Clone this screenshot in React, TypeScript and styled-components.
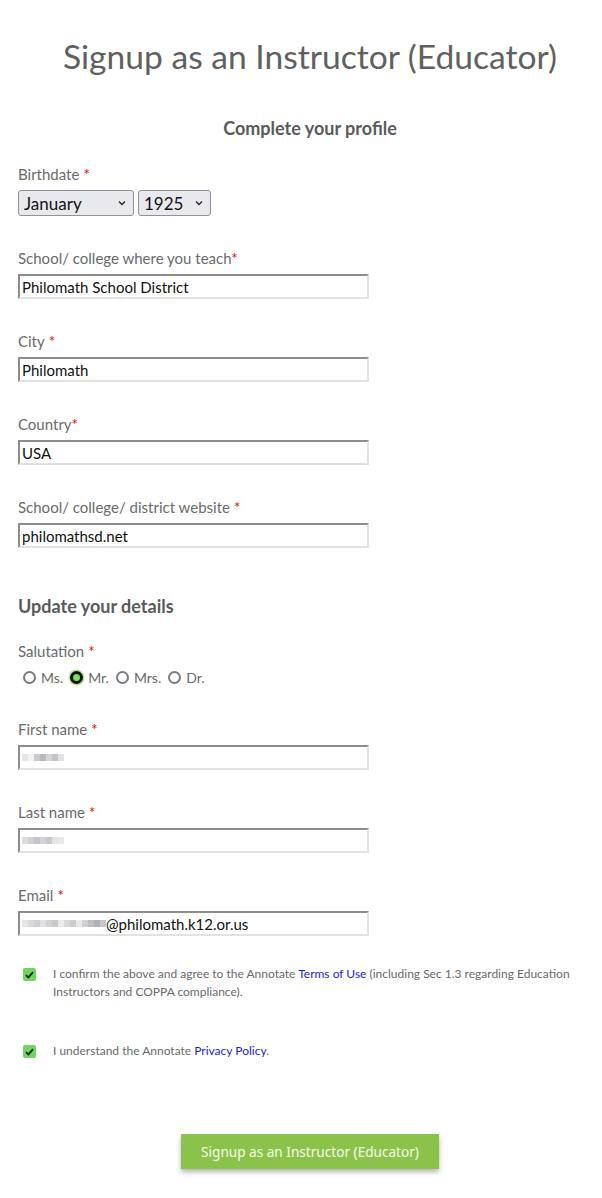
import React from 'react';
import styled, { createGlobalStyle } from 'styled-components';

const GlobalStyle = createGlobalStyle`
  html, body {
    margin: 0;
    padding: 0;
    background: #fff;
  }
  body {
    font-family: 'Lato', 'Noto Sans', sans-serif;
    color: #666;
  }
`;

const blurFirst = ['#e4e4e6', '#f2f2f2', '#c9c9cd', '#b8b9c0', '#d3d3d8', '#c2c2c8', '#dfe2e8'];
const blurLast = ['#dcdcdc', '#d1d1d5', '#bfc3cc', '#d4d4d8', '#c8c8cc', '#e2e4e8', '#e9e9ea'];
const blurEmail = [
  '#e6e6e8', '#d9d9dc', '#cfcfd3', '#e1e1e3', '#d2d2d6', '#c9c9cd', '#ebebec', '#d7d7da',
  '#cccccf', '#e8e8e9', '#d0d0d4', '#bdbdc2', '#b0b0b6', '#c6c6cb',
];

const Redacted: React.FC<{ tones: string[] }> = ({ tones }) => (
  <Blur>
    {tones.map((c, i) => (
      <BlurCell key={i} style={{ background: c }} />
    ))}
  </Blur>
);

const Field: React.FC<{ label: string; tight?: boolean; children: React.ReactNode }> = ({
  label,
  tight,
  children,
}) => (
  <FieldWrap>
    <Label>
      {label}
      <Req $tight={tight}>*</Req>
    </Label>
    {children}
  </FieldWrap>
);

const Chevron = () => (
  <ChevronIcon width='8' height='6' viewBox='0 0 8 6'>
    <path d='M1 1.5 L4 4.5 L7 1.5' fill='none' stroke='#222' strokeWidth='1.3' />
  </ChevronIcon>
);

const Check = () => (
  <svg width='9' height='8' viewBox='0 0 9 8'>
    <path d='M1 4.2 L3.4 6.5 L8 1.2' fill='none' stroke='#111' strokeWidth='1.8' />
  </svg>
);

export default function App() {
  return (
    <Page>
      <GlobalStyle />
      <Title>Signup as an Instructor (Educator)</Title>
      <SubTitle>Complete your profile</SubTitle>

      <Field label='Birthdate'>
        <SelectRow>
          <SelectWrap $width={116}>
            <Select defaultValue='January'>
              <option>January</option>
            </Select>
            <Chevron />
          </SelectWrap>
          <SelectWrap $width={73}>
            <Select defaultValue='1925'>
              <option>1925</option>
            </Select>
            <Chevron />
          </SelectWrap>
        </SelectRow>
      </Field>

      <Field label='School/ college where you teach' tight>
        <InputBox>
          <TextInput defaultValue='Philomath School District' />
        </InputBox>
      </Field>

      <Field label='City'>
        <InputBox>
          <TextInput defaultValue='Philomath' />
        </InputBox>
      </Field>

      <Field label='Country' tight>
        <InputBox>
          <TextInput defaultValue='USA' />
        </InputBox>
      </Field>

      <Field label='School/ college/ district website'>
        <InputBox>
          <TextInput defaultValue='philomathsd.net' />
        </InputBox>
      </Field>

      <Section>Update your details</Section>

      <Field label='Salutation'>
        <RadioRow>
          {['Ms.', 'Mr.', 'Mrs.', 'Dr.'].map(s => (
            <RadioLabel key={s}>
              <Radio type='radio' name='salutation' defaultChecked={s === 'Mr.'} />
              {s}
            </RadioLabel>
          ))}
        </RadioRow>
      </Field>

      <Field label='First name'>
        <InputBox>
          <Redacted tones={blurFirst} />
          <TextInput defaultValue='' />
        </InputBox>
      </Field>

      <Field label='Last name'>
        <InputBox>
          <Redacted tones={blurLast} />
          <TextInput defaultValue='' />
        </InputBox>
      </Field>

      <Field label='Email'>
        <InputBox>
          <Redacted tones={blurEmail} />
          <TextInput defaultValue='@philomath.k12.or.us' />
        </InputBox>
      </Field>

      <Agreements>
        <Agree>
          <CheckBox>
            <Check />
          </CheckBox>
          <AgreeText>
            I confirm the above and agree to the Annotate <Link href='#'>Terms of Use</Link> (including Sec 1.3
            regarding Education Instructors and COPPA compliance).
          </AgreeText>
        </Agree>
        <Agree>
          <CheckBox>
            <Check />
          </CheckBox>
          <AgreeText>
            I understand the Annotate <Link href='#'>Privacy Policy</Link>.
          </AgreeText>
        </Agree>
      </Agreements>

      <ButtonRow>
        <SubmitButton type='button'>Signup as an Instructor (Educator)</SubmitButton>
      </ButtonRow>
    </Page>
  );
}

const Page = styled.div`
  width: 602px;
  box-sizing: border-box;
  padding: 32px 0 28px 18px;
`;

const Title = styled.h1`
  margin: 0;
  text-align: center;
  font-weight: 400;
  font-size: 33.6px;
  line-height: 48px;
  color: #606060;
`;

const SubTitle = styled.h3`
  margin: 36px 0 24px;
  text-align: center;
  font-size: 18px;
  font-weight: 700;
  line-height: 24px;
  color: #5a5a5a;
`;

const Section = styled.h3`
  margin: 46px 0 23px;
  font-size: 18px;
  font-weight: 700;
  line-height: 24px;
  color: #5a5a5a;
`;

const FieldWrap = styled.div`
  margin-bottom: 32px;
`;

const Label = styled.div`
  font-size: 15px;
  line-height: 20px;
  color: #6a6a6a;
  margin-bottom: 6px;
`;

const Req = styled.span<{ $tight?: boolean }>`
  color: #e00;
  margin-left: ${p => (p.$tight ? '0' : '4px')};
`;

const SelectRow = styled.div`
  display: flex;
  gap: 4px;
  margin-top: 1px;
`;

const SelectWrap = styled.div<{ $width: number }>`
  position: relative;
  width: ${p => p.$width}px;
  height: 26px;
`;

const Select = styled.select`
  appearance: none;
  width: 100%;
  height: 100%;
  box-sizing: border-box;
  border: 1px solid #8f8f9d;
  border-radius: 3px;
  background: #e9e9ed;
  padding: 0 0 0 5px;
  font-family: 'Lato', 'Noto Sans', sans-serif;
  font-size: 17px;
  color: #111;
`;

const ChevronIcon = styled.svg`
  position: absolute;
  right: 8px;
  top: 10px;
  pointer-events: none;
`;

const InputBox = styled.div`
  display: flex;
  align-items: center;
  width: 351px;
  height: 25px;
  box-sizing: border-box;
  border: 2px solid #e2e2e2;
  border-top-color: #8c8c8c;
  border-left-color: #8c8c8c;
  background: #fff;
  padding-left: 2px;
`;

const TextInput = styled.input`
  flex: 1;
  min-width: 0;
  border: none;
  outline: none;
  padding: 0;
  background: transparent;
  font-family: 'Lato', 'Noto Sans', sans-serif;
  font-size: 15px;
  color: #111;
`;

const Blur = styled.span`
  display: flex;
  height: 7px;
`;

const BlurCell = styled.span`
  width: 6px;
  height: 7px;
`;

const RadioRow = styled.div`
  display: flex;
  align-items: center;
  height: 20px;
  gap: 7px;
  padding-left: 5px;
`;

const RadioLabel = styled.label`
  display: flex;
  align-items: center;
  gap: 5px;
  font-size: 14px;
  color: #6a6a6a;
`;

const Radio = styled.input`
  appearance: none;
  margin: 0;
  width: 13px;
  height: 13px;
  border-radius: 50%;
  border: 2px solid #7a7a82;
  box-sizing: border-box;
  background: #fff;

  &:checked {
    border: 3px solid #111;
    background: #7ee05a;
    box-shadow: 0 0 0 1.5px #a9ec8c;
  }
`;

const Agreements = styled.div`
  display: flex;
  flex-direction: column;
  gap: 41px;
  padding-left: 5px;
  margin-top: -3px;
`;

const Agree = styled.div`
  display: flex;
  align-items: flex-start;
  gap: 17px;
`;

const CheckBox = styled.span`
  flex: none;
  width: 13px;
  height: 13px;
  border-radius: 2px;
  background: #6cd95a;
  margin-top: 3px;
  display: flex;
  align-items: center;
  justify-content: center;
`;

const AgreeText = styled.p`
  margin: 0;
  font-size: 12px;
  line-height: 18px;
  color: #6a6a6a;
  max-width: 540px;
`;

const Link = styled.a`
  color: #1a1aee;
  text-decoration: none;
`;

const ButtonRow = styled.div`
  display: flex;
  justify-content: center;
  margin-top: 74px;
`;

const SubmitButton = styled.button`
  width: 258px;
  height: 35px;
  border: none;
  background: #8bc34a;
  color: #f4fbe9;
  font-family: 'Noto Sans', 'Open Sans', sans-serif;
  font-size: 13.6px;
  box-shadow: 0 3px 5px rgba(0, 0, 0, 0.3);
`;
